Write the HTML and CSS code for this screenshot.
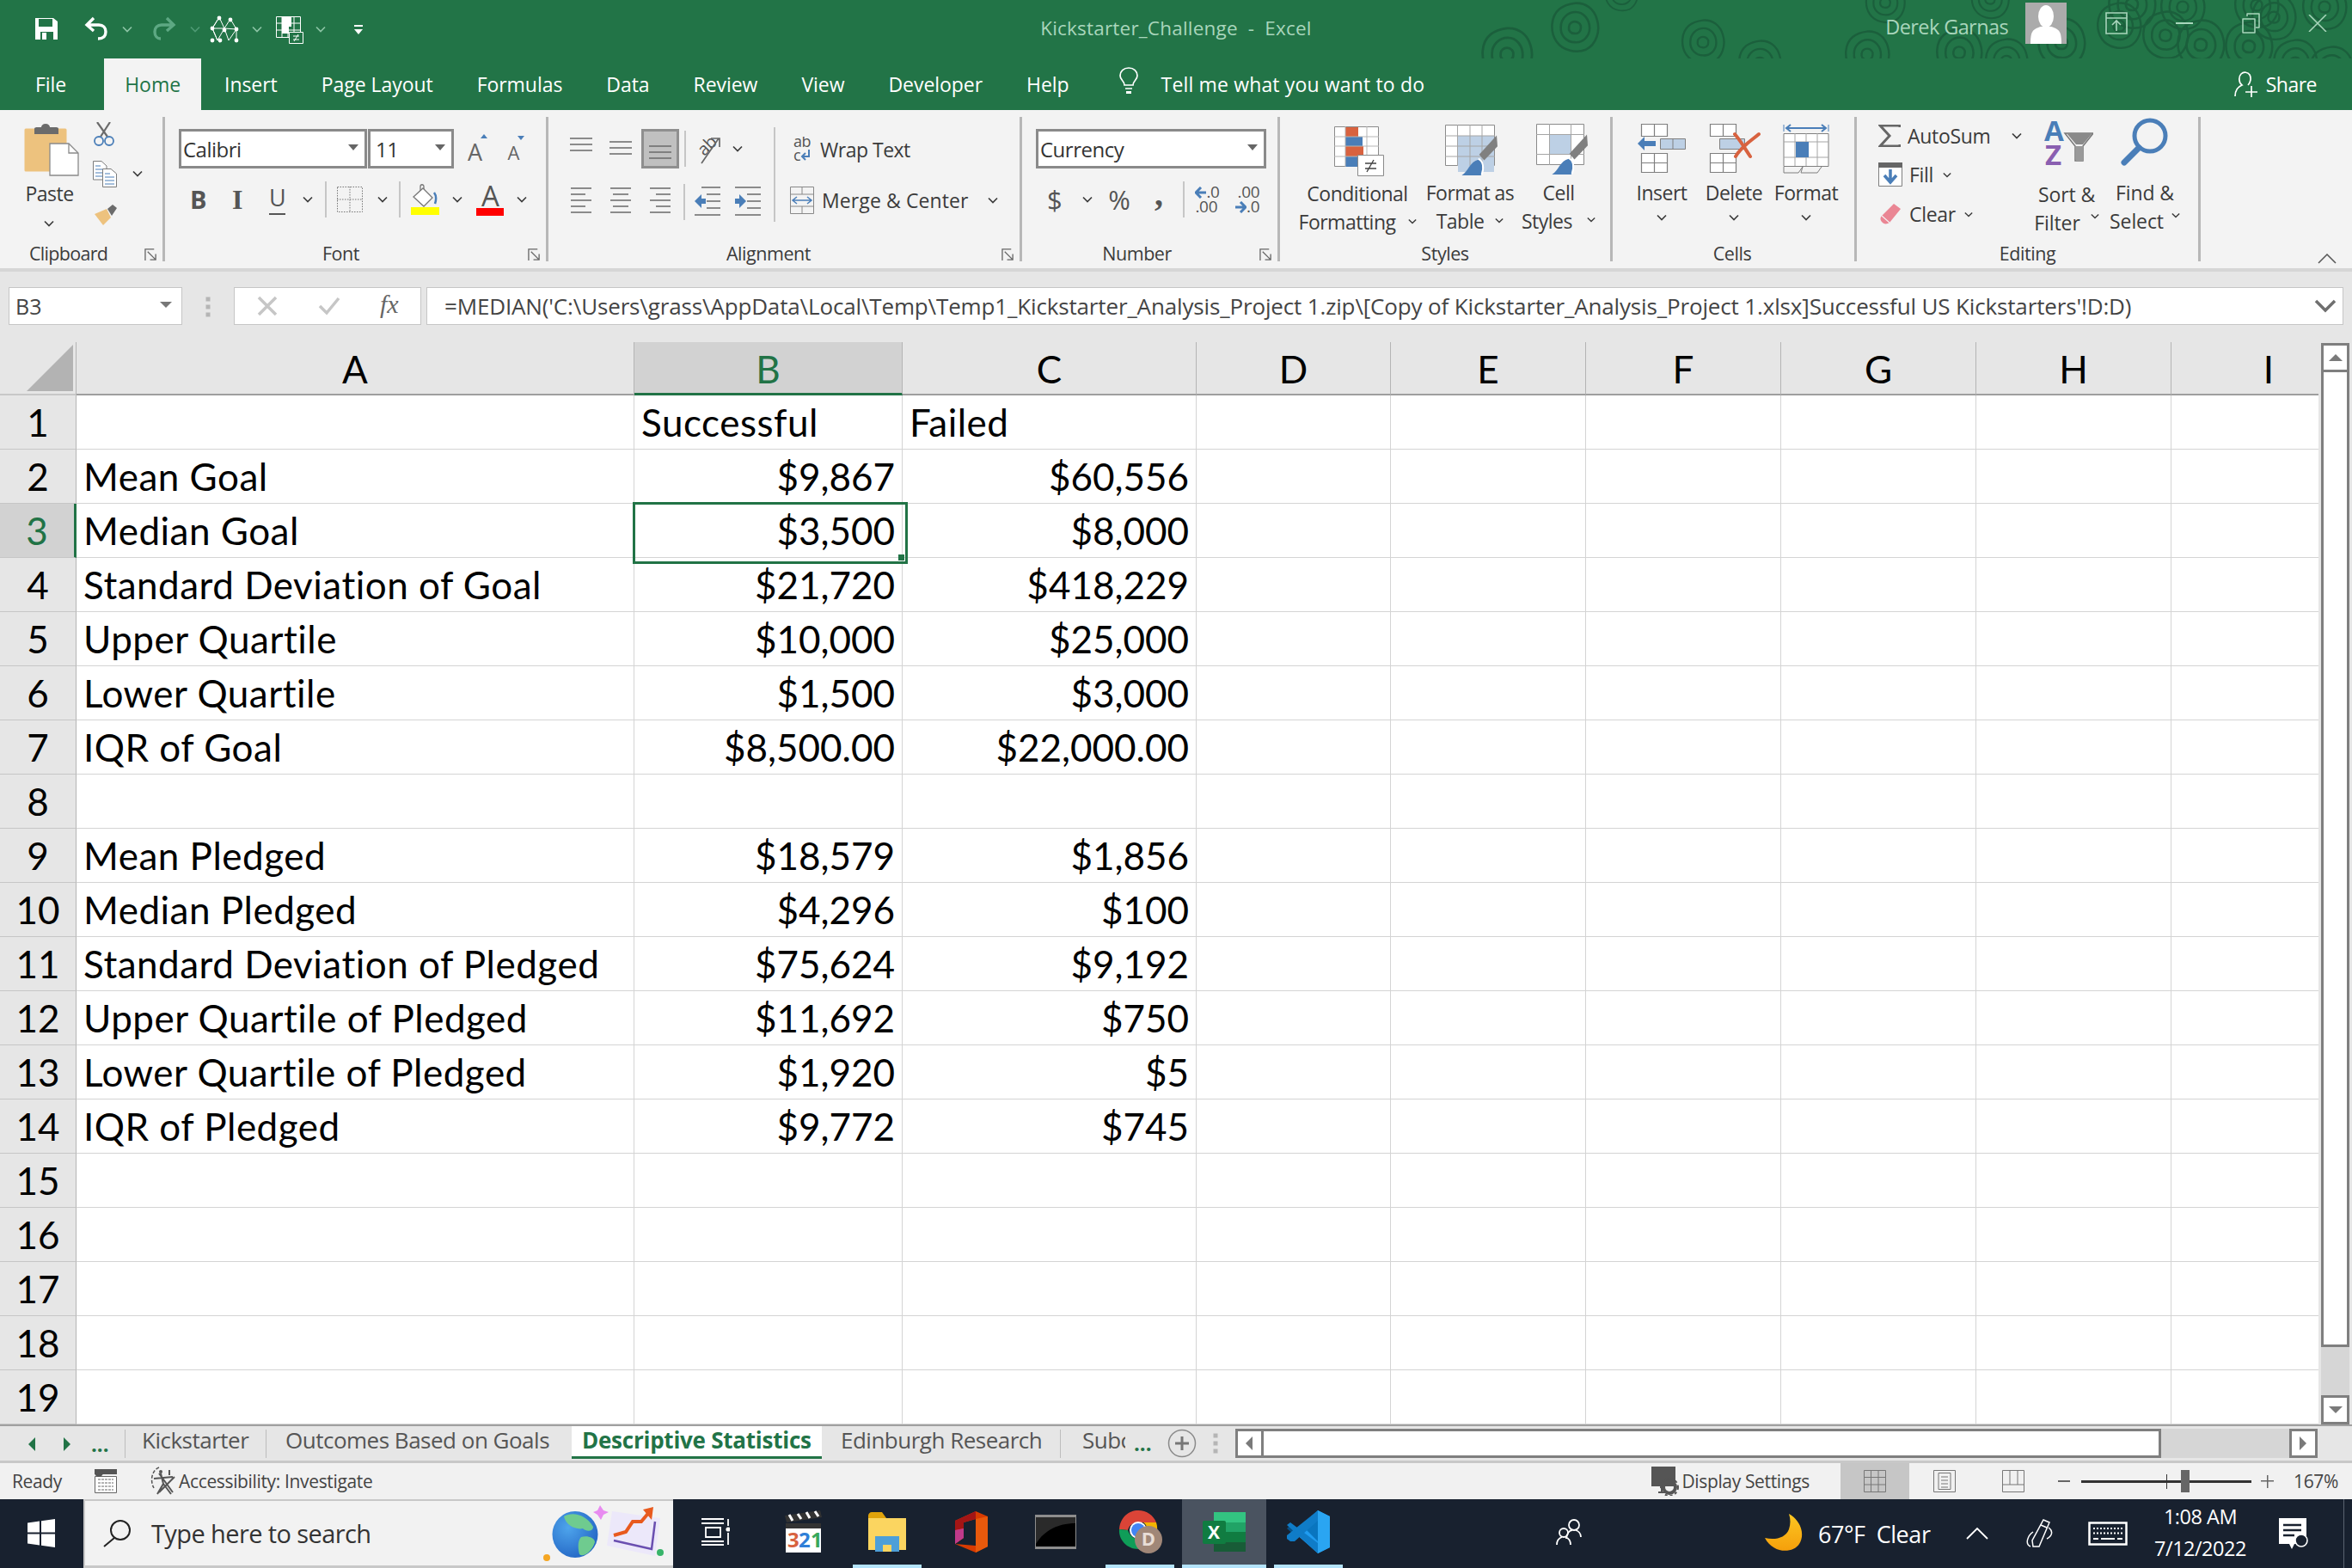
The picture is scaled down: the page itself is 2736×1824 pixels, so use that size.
FILE: index.html
```html
<!DOCTYPE html>
<html lang="en">
<head>
<meta charset="utf-8">
<title>Kickstarter_Challenge - Excel</title>
<link rel="stylesheet" href="styles.css">
</head>
<body>
<svg class="defs" width="0" height="0" aria-hidden="true">
  <defs>
    <symbol id="chev" viewBox="0 0 12 8"><path d="M1 1.5 6 6.5 11 1.5" fill="none" stroke="currentColor" stroke-width="1.7"/></symbol>
    <symbol id="launch" viewBox="0 0 16 16"><path d="M1 15V1H12M4 4 14 14M14 7V14H7" fill="none" stroke="#666" stroke-width="1.4"/></symbol>
    <symbol id="swirl" viewBox="0 0 70 70"><g fill="none" stroke="#1b5f3c" stroke-width="3"><path d="M35 2C50 1 61 10 65 24 70 40 64 58 50 65 37 70 19 67 10 54 1 41 2 20 14 10 20 5 27 3 35 2Z"/><path d="M36 14C47 14 55 24 55 36 55 47 46 56 35 55 24 55 15 46 16 34 16 23 25 14 36 14Z"/><path d="M35 27C40 27 44 31 43 36 43 41 39 44 34 43 29 43 26 39 27 34 27 30 31 27 35 27Z"/></g></symbol>
    <symbol id="lines-top" viewBox="0 0 26 24"><path d="M0 1H26M0 8H26M0 15H26" stroke="#6a6a6a" stroke-width="1.6"/></symbol>
    <symbol id="lines-left" viewBox="0 0 26 36"><path d="M1 2H25M1 9H18M1 16H25M1 23H18M1 30H25" stroke="#6a6a6a" stroke-width="1.6"/></symbol>
    <symbol id="lines-center" viewBox="0 0 26 36"><path d="M1 2H25M4 9H22M1 16H25M4 23H22M1 30H25" stroke="#6a6a6a" stroke-width="1.6"/></symbol>
    <symbol id="lines-right" viewBox="0 0 26 36"><path d="M1 2H25M8 9H25M1 16H25M8 23H25M1 30H25" stroke="#6a6a6a" stroke-width="1.6"/></symbol>
    <symbol id="brush" viewBox="0 0 62 62"><path d="M61 13 62 26 46 43 40 36Z" fill="#808080"/><path d="M19 61C27 56 29 44 39 42 46 46 46 55 42 61Z" fill="#4a7eb8"/><path d="M39 41C45 44 46 52 43 60" fill="none" stroke="#fff" stroke-width="2"/></symbol>
  </defs>
</svg>

<div class="app">
  <header class="titlebar">
    <svg class="swirls" width="1040" height="128" viewBox="1696 0 1040 128" aria-hidden="true">
      <use href="#swirl" x="1721" y="30" width="64" height="66"/><use href="#swirl" x="1800" y="2" width="64" height="60"/><use href="#swirl" x="1856" y="-28" width="60" height="42"/><use href="#swirl" x="1953" y="22" width="56" height="54"/><use href="#swirl" x="2019" y="46" width="56" height="54"/><use href="#swirl" x="2144" y="35" width="56" height="56"/><use href="#swirl" x="2250" y="30" width="58" height="62"/><use href="#swirl" x="2306" y="44" width="56" height="54"/><use href="#swirl" x="2168" y="-22" width="50" height="50"/><use href="#swirl" x="2290" y="-25" width="50" height="48"/><use href="#swirl" x="2368" y="20" width="60" height="60"/><use href="#swirl" x="2450" y="-25" width="60" height="60"/><use href="#swirl" x="2436" y="2" width="58" height="56"/><use href="#swirl" x="2490" y="12" width="58" height="58"/><use href="#swirl" x="2530" y="22" width="60" height="60"/><use href="#swirl" x="2586" y="22" width="60" height="64"/><use href="#swirl" x="2640" y="45" width="60" height="56"/><use href="#swirl" x="2684" y="52" width="56" height="58"/><use href="#swirl" x="2616" y="-8" width="58" height="56"/><use href="#swirl" x="2676" y="-20" width="56" height="56"/><use href="#swirl" x="2510" y="-20" width="58" height="56"/><use href="#swirl" x="2596" y="-22" width="58" height="56"/>
    </svg>
    <div class="qat">
      <svg class="q-save" width="26" height="26" viewBox="0 0 26 26"><path d="M0 1H21L26 5V26H0Z" fill="#fff"/><path d="M4 2H20V11H4Z" fill="#227447"/><path d="M6 17H21V26H6Z" fill="#227447"/><path d="M8 18H13V26H8Z" fill="#fff"/></svg>
      <svg class="q-undo" width="27" height="28" viewBox="0 0 27 28"><path d="M11 2 3 10 11 17M3 10H17C22 10 25 13 25 18S22 26 16 26" fill="none" stroke="#fff" stroke-width="3.4"/></svg>
      <svg class="q-chev qc-1" width="12" height="8"><use href="#chev"/></svg>
      <svg class="q-redo" width="27" height="28" viewBox="0 0 27 28"><path d="M16 2 24 10 16 17M24 10H10C5 10 2 13 2 18S5 26 9 26" fill="none" stroke="#5da883" stroke-width="3.4"/></svg>
      <svg class="q-chev q-dim qc-2" width="12" height="8"><use href="#chev"/></svg>
      <svg class="q-net" width="34" height="32" viewBox="0 0 34 32"><g fill="none" stroke="#fff" stroke-width="1"><path d="M11 2 3 15 9 29M11 2 17 15 22 29M11 2 3 15M24 4 17 15 9 29M24 4 31 16 31 29M3 15 9 29M31 16 22 29M3 15 17 15M17 15 31 16"/></g><g fill="#fff"><circle cx="11" cy="3" r="2.4"/><circle cx="24" cy="5" r="2.4"/><circle cx="3" cy="15" r="2.4"/><circle cx="17" cy="17" r="2.4"/><circle cx="31" cy="16" r="2.4"/><circle cx="3" cy="29" r="2.4"/><circle cx="12" cy="29" r="2.4"/><circle cx="31" cy="29" r="2.4"/></g></svg>
      <svg class="q-chev qc-3" width="12" height="8"><use href="#chev"/></svg>
      <svg class="q-cf" width="32" height="32" viewBox="0 0 32 32"><path d="M.5.5H28.5V24.5H.5Z" fill="none" stroke="#fff"/><path d="M7 .5V24.5M14 .5V24.5M21 .5V24.5M.5 8H28.5M.5 16H28.5" stroke="#fff"/><path d="M7 1H18V12H15V20H7Z" fill="#fff"/><path d="M15.500 18.500H31.500V31.500H15.500Z" fill="#227447" stroke="#fff"/><path d="M20 23H27M20 27H27M26 21 21 29" stroke="#fff"/></svg>
      <svg class="q-chev qc-4" width="12" height="8"><use href="#chev"/></svg>
      <svg class="q-cust" width="10" height="12" viewBox="0 0 10 12"><path d="M0 1H10" stroke="#fff" stroke-width="2"/><path d="M0 5H10L5 11Z" fill="#fff"/></svg>
    </div>
    <div class="doc-title">Kickstarter_Challenge&nbsp; -&nbsp; Excel</div>
    <div class="account">
      <span class="user">Derek Garnas</span>
      <svg class="avatar" width="48" height="48" viewBox="0 0 48 48"><path d="M0 0H48V48H0Z" fill="#ababab"/><ellipse cx="24" cy="16" rx="9" ry="13" fill="#fff"/><path d="M6 48C6 34 8 31 18 28H30C40 31 42 34 42 48Z" fill="#fff"/></svg>
      <svg class="win-display" width="26" height="26" viewBox="0 0 26 26"><path d="M1 1H25V25H1ZM1 7H25M13 22V11M8 15 13 10 18 15" fill="none" stroke="#a9d6bc" stroke-width="1.6"/></svg>
      <svg class="win-min" width="20" height="2" viewBox="0 0 20 2"><path d="M0 1H20" stroke="#a9d6bc" stroke-width="2"/></svg>
      <svg class="win-rest" width="21" height="24" viewBox="0 0 21 24"><path d="M1 7H15V23H1ZM6 4V1H20V17H16" fill="none" stroke="#a9d6bc" stroke-width="1.5" stroke-linejoin="round"/></svg>
      <svg class="win-close" width="22" height="20" viewBox="0 0 22 20"><path d="M1 0 21 20M21 0 1 20" stroke="#a9d6bc" stroke-width="1.5"/></svg>
    </div>
  </header>

  <nav class="tabs">
    <span class="tab tab-file">File</span>
    <span class="tab tab-home">Home</span>
    <span class="tab">Insert</span>
    <span class="tab">Page Layout</span>
    <span class="tab">Formulas</span>
    <span class="tab">Data</span>
    <span class="tab">Review</span>
    <span class="tab">View</span>
    <span class="tab">Developer</span>
    <span class="tab">Help</span>
    <svg class="bulb" width="24" height="32" viewBox="0 0 24 32"><path d="M7 21C7 16 2 15 2 10 2 5 6 1 12 1S22 5 22 10C22 15 17 16 17 21ZM8 25H16" fill="none" stroke="#fff" stroke-width="1.7"/><path d="M9 28H15V31H9Z" fill="#fff"/></svg>
    <span class="tell">Tell me what you want to do</span>
    <span class="share">
      <svg width="28" height="30" viewBox="0 0 28 30"><path d="M1 29C1 22 4 18 9 16 5 13 5 6 8 3 11 0 16 1 18 4 20 8 19 13 16 16" fill="none" stroke="#fff" stroke-width="1.7"/><path d="M20 17V30M13 24H27" stroke="#fff" stroke-width="1.7"/></svg>
      Share
    </span>
  </nav>

  <section class="ribbon">
    <div class="group g-clip">
      <div class="gbody clip-body">
        <div class="paste">
          <svg width="64" height="62" viewBox="0 0 64 62"><path d="M2 7H48V54H2Z" fill="#edc27e" stroke="#edc27e" stroke-width="3" stroke-linejoin="round"/><path d="M12 12V6C12 4 14 4 18 4H20C20 2 22 0 25 0S30 2 30 4H34C38 4 40 4 40 6V12Z" fill="#6b6b6b"/><path d="M30 23H52L63 34V60H30Z" fill="#fff" stroke="#8a8a8a" stroke-width="1.3"/><path d="M52 23V34H63" fill="none" stroke="#8a8a8a" stroke-width="1.3"/></svg>
          <span class="paste-label">Paste</span>
          <svg class="paste-chev" width="12" height="8"><use href="#chev"/></svg>
        </div>
        <div class="clip-tools">
          <svg class="cut" width="26" height="28" viewBox="0 0 26 28"><path d="M5 0 17 17M20 0 9 17" stroke="#6b6b6b" stroke-width="2.2"/><circle cx="7" cy="22" r="5" fill="none" stroke="#4a7eb8" stroke-width="1.8"/><circle cx="19" cy="22" r="5" fill="none" stroke="#4a7eb8" stroke-width="1.8"/></svg>
          <div class="copy-row">
            <svg width="28" height="31" viewBox="0 0 28 31"><path d="M.5.5H10L16 6V22H.5Z" fill="#fff" stroke="#7c7c7c"/><path d="M3 6H9M3 10H13M3 14H13M3 18H13" stroke="#4a7eb8"/><path d="M11.500 9.500H21L27.500 15V30.500H11.500Z" fill="#fff" stroke="#7c7c7c"/><path d="M14 15H20M14 19H25M14 23H25M14 27H25" stroke="#4a7eb8"/></svg>
            <svg class="copy-chev" width="12" height="8"><use href="#chev"/></svg>
          </div>
          <svg class="painter" width="26" height="24" viewBox="0 0 26 24"><path d="M0 11 14 5 19 15 10 24Z" fill="#edc27e"/><path d="M15 5 21 0 26 4 20 13Z" fill="#6b6b6b"/></svg>
        </div>
      </div>
      <div class="glabel">Clipboard</div>
      <svg class="launcher" width="15" height="15"><use href="#launch"/></svg>
    </div>

    <div class="group g-font">
      <div class="gbody rows">
        <div class="row row1">
          <div class="select sel-font"><span>Calibri</span><i class="tri"></i></div>
          <div class="select sel-size"><span>11</span><i class="tri"></i></div>
          <span class="grow">A<i class="up"></i></span>
          <span class="shrink">A<i class="down"></i></span>
        </div>
        <div class="row row2">
          <b class="fmt fmt-b">B</b>
          <i class="fmt fmt-i">I</i>
          <span class="fmt fmt-u">U</span>
          <svg class="c-u" width="12" height="8"><use href="#chev"/></svg>
          <i class="vsep vs-a"></i>
          <svg class="borders" width="30" height="30" viewBox="0 0 30 30"><path d="M.5.500H29.500V29.500H.5ZM15 0V30M0 15H30" fill="none" stroke="#777" stroke-dasharray="1.500 1.500"/></svg>
          <svg class="c-b" width="12" height="8"><use href="#chev"/></svg>
          <i class="vsep vs-b"></i>
          <svg class="fill" width="33" height="36" viewBox="0 0 33 36"><path d="M3 15 14 5 25 16 15 26Z" fill="#fff" stroke="#777" stroke-width="1.300"/><path d="M15 6V3C15 0 11 0 11 3V8" fill="none" stroke="#777" stroke-width="1.300"/><path d="M27 10C30 14 29 20 28 23" fill="none" stroke="#4a7eb8" stroke-width="2.500"/><path d="M0 27H33V36H0Z" fill="#ffff00"/></svg>
          <svg class="c-f" width="12" height="8"><use href="#chev"/></svg>
          <span class="fontcolor">A<i></i></span>
          <svg class="c-c" width="12" height="8"><use href="#chev"/></svg>
        </div>
      </div>
      <div class="glabel">Font</div>
      <svg class="launcher" width="15" height="15"><use href="#launch"/></svg>
    </div>

    <div class="group g-align">
      <div class="gbody align-body">
        <div class="align-left">
          <div class="row row1 a-r1">
            <svg class="al-t" width="26" height="24"><use href="#lines-top"/></svg>
            <svg class="al-m" width="26" height="24"><use href="#lines-top"/></svg>
            <span class="al-b"><svg width="26" height="24"><use href="#lines-top"/></svg></span>
            <i class="vsep vs-c"></i>
            <svg class="orient" width="30" height="36" viewBox="0 0 30 36"><text x="2" y="22" transform="rotate(-45 12 16)" class="orient-text">ab</text><path d="M6 35 26 6M17 6H27V16" fill="none" stroke="#666" stroke-width="1.700"/></svg>
            <svg class="c-o" width="12" height="8"><use href="#chev"/></svg>
          </div>
          <div class="row a-r2">
            <svg class="al-l" width="26" height="36"><use href="#lines-left"/></svg>
            <svg class="al-c" width="26" height="36"><use href="#lines-center"/></svg>
            <svg class="al-c" width="26" height="36"><use href="#lines-right"/></svg>
            <i class="vsep vs-d"></i>
            <svg class="indent" width="30" height="36" viewBox="0 0 30 36"><path d="M8 1H30M14 9H30M14 17H30M14 25H30M0 33H30" stroke="#6a6a6a" stroke-width="1.500"/><path d="M0 17 8 9V14H13V20H8V25Z" fill="#4a7eb8"/></svg>
            <svg class="outdent" width="30" height="36" viewBox="0 0 30 36"><path d="M0 1H30M14 9H30M14 17H30M14 25H30M0 33H30" stroke="#6a6a6a" stroke-width="1.500"/><path d="M13 17 5 9V14H0V20H5V25Z" fill="#4a7eb8"/></svg>
          </div>
        </div>
        <i class="vsep vs-e"></i>
        <div class="align-right">
          <div class="wrap">
            <svg width="22" height="30" viewBox="0 0 22 30"><text x="1" y="12" class="wrap-ab">ab</text><text x="1" y="28" class="wrap-ab">c</text><path d="M19 15V23H12M15 19 11 23 15 27" fill="none" stroke="#4a7eb8" stroke-width="2"/></svg>
            <span>Wrap Text</span>
          </div>
          <div class="merge">
            <svg width="28" height="32" viewBox="0 0 28 32"><path d="M.5.500H27.500V31.500H.5ZM0 9H28M0 23H28M14 0V9M14 23V32" fill="none" stroke="#888"/><path d="M3 16H25M8 12 3 16 8 20M20 12 25 16 20 20" fill="none" stroke="#4a7eb8" stroke-width="1.500"/></svg>
            <span>Merge &amp; Center</span>
            <svg class="merge-chev" width="12" height="8"><use href="#chev"/></svg>
          </div>
        </div>
      </div>
      <div class="glabel">Alignment</div>
      <svg class="launcher" width="15" height="15"><use href="#launch"/></svg>
    </div>

    <div class="group g-num">
      <div class="gbody rows">
        <div class="row row1"><div class="select sel-num"><span>Currency</span><i class="tri"></i></div></div>
        <div class="row row2">
          <span class="numsym n-d">$</span>
          <svg class="c-d" width="12" height="8"><use href="#chev"/></svg>
          <span class="numsym n-p">%</span>
          <span class="numsym n-c">,</span>
          <i class="vsep vs-f"></i>
          <span class="dec dec-in"><span><svg width="13" height="14" viewBox="0 0 13 14"><path d="M7 1 1 7 7 13M2 7H13" fill="none" stroke="#4a7eb8" stroke-width="3"/></svg>.0</span><span>.00</span></span>
          <span class="dec dec-out"><span>.00</span><span><svg width="13" height="14" viewBox="0 0 13 14"><path d="M6 1 12 7 6 13M11 7H0" fill="none" stroke="#4a7eb8" stroke-width="3"/></svg>.0</span></span>
        </div>
      </div>
      <div class="glabel">Number</div>
      <svg class="launcher" width="15" height="15"><use href="#launch"/></svg>
    </div>

    <div class="group g-styles">
      <div class="gbody bigs">
        <div class="big big-cf">
          <svg width="60" height="60" viewBox="0 0 60 60"><path d="M.5.5H51.500V46.500H.5Z" fill="#fff" stroke="#8a8a8a"/><path d="M13 1H28V12H13Z" fill="#d8623f"/><path d="M13 12H33V23H13Z" fill="#4a7eb8"/><path d="M13 23H34V35H13Z" fill="#d8623f"/><path d="M13 35H28V47H13Z" fill="#4a7eb8"/><path d="M0 12H52M0 23H52M0 35H52M13 0V47M38 0V47" stroke="#b5b5b5"/><path d="M27.500 33.500H57.500V57.500H27.500Z" fill="#fff" stroke="#8a8a8a"/><path d="M36 43H49M36 49H49M46 39 38 53" stroke="#444" stroke-width="1.400"/></svg>
          <span>Conditional</span>
          <span>Formatting<svg width="10" height="7"><use href="#chev"/></svg></span>
        </div>
        <div class="big big-fat">
          <svg width="62" height="60" viewBox="0 0 62 60"><path d="M.5.5H57.500V47.500H.5Z" fill="#fff" stroke="#8a8a8a"/><path d="M15 13H57V55H15Z" fill="#bdd0e5"/><path d="M14.500 0V48M29 0V48M43 0V48M0 13H58M0 25H58M0 37H58" stroke="#a5a5a5"/><use href="#brush" width="62" height="60"/></svg>
          <span>Format as</span>
          <span>Table<svg width="10" height="7"><use href="#chev"/></svg></span>
        </div>
        <div class="big big-cs">
          <svg width="60" height="60" viewBox="0 0 60 60"><path d="M.5.5H55.500V47.500H.5Z" fill="#fff" stroke="#8a8a8a"/><path d="M16 13H41V36H16Z" fill="#bdd0e5"/><path d="M15.500 0V48M40.500 0V48M0 12.500H56M0 35.500H56" stroke="#a5a5a5"/><use href="#brush" width="60" height="60"/></svg>
          <span>Cell</span>
          <span>Styles<svg width="10" height="7"><use href="#chev"/></svg></span>
        </div>
      </div>
      <div class="glabel">Styles</div>
    </div>

    <div class="group g-cells">
      <div class="gbody bigs">
        <div class="big big-ins">
          <svg width="58" height="58" viewBox="0 0 58 58"><g fill="#fff" stroke="#7f7f7f" stroke-width="1.200"><path d="M5.500 .5H35.500V14.500H5.500ZM20.500 0V15M5.500 34.500H35.500V56.500H5.500ZM20.500 34V57M5 45.500H36"/></g><path d="M27.500 17.500H56.500V29.500H27.500Z" fill="#bdd0e5" stroke="#7f7f7f"/><path d="M42 17V30" stroke="#7f7f7f"/><path d="M1 23 9 15V20H22V26H9V31Z" fill="#4a7eb8"/></svg>
          <span>Insert</span>
          <svg class="big-chev" width="12" height="8"><use href="#chev"/></svg>
        </div>
        <div class="big big-del">
          <svg width="62" height="58" viewBox="0 0 62 58"><g fill="#fff" stroke="#7f7f7f" stroke-width="1.200"><path d="M3.500 .5H33.500V14.500H3.500ZM18.500 0V15M3.500 34.500H33.500V56.500H3.500ZM18.500 34V57M3 45.500H34"/></g><path d="M14.500 17.500H43.500V29.500H14.500Z" fill="#bdd0e5" stroke="#7f7f7f"/><path d="M32 12C39 20 44 29 50 38M60 12C52 19 40 26 33 38" fill="none" stroke="#d8623f" stroke-width="4" stroke-linecap="round"/></svg>
          <span>Delete</span>
          <svg class="big-chev" width="12" height="8"><use href="#chev"/></svg>
        </div>
        <div class="big big-fmt">
          <svg width="54" height="58" viewBox="0 0 54 58"><path d="M1 1V9M53 1V9" stroke="#4a7eb8" stroke-width="1"/><path d="M4 5H50M9 1 4 5 9 9M45 1 50 5 45 9" fill="none" stroke="#4a7eb8" stroke-width="2"/><path d="M1 11.500H53V49.500H1Z" fill="#fff" stroke="#7f7f7f"/><path d="M14 11V49M40 11V49M27 11V49M1 21H53M1 39H53" stroke="#a5a5a5"/><path d="M15 21H30V39H15Z" fill="#4a7eb8"/><path d="M1 50V57H18L23 50M23 50 21 57H40L45 50" fill="none" stroke="#7f7f7f"/></svg>
          <span>Format</span>
          <svg class="big-chev" width="12" height="8"><use href="#chev"/></svg>
        </div>
      </div>
      <div class="glabel">Cells</div>
    </div>

    <div class="group g-edit">
      <div class="gbody edit-body">
        <div class="edit-list">
          <div class="e-row e-sum">
            <svg width="26" height="26" viewBox="0 0 26 26"><path d="M25 3V1H2L13 13 2 25H25V23" fill="none" stroke="#666" stroke-width="3"/></svg>
            <span>AutoSum</span>
            <svg class="e-c1" width="12" height="8"><use href="#chev"/></svg>
          </div>
          <div class="e-row e-fill">
            <svg width="28" height="28" viewBox="0 0 28 28"><path d="M.5.5H27.500V27.500H.5Z" fill="#fff" stroke="#7f7f7f"/><path d="M0 0H28V6H0Z" fill="#666"/><path d="M14 8V21M7 15 14 23 21 15" fill="none" stroke="#4a7eb8" stroke-width="3.500"/></svg>
            <span>Fill</span>
            <svg class="e-c2" width="10" height="7"><use href="#chev"/></svg>
          </div>
          <div class="e-row e-clear">
            <svg width="25" height="24" viewBox="0 0 25 24"><path d="M16 0 24 6 11 22C8 24 4 24 2 21 0 19 0 16 2 14Z" fill="#ea8694"/><path d="M2 14 11 22" stroke="#f3f3f3" stroke-width="1.200"/></svg>
            <span>Clear</span>
            <svg class="e-c3" width="10" height="7"><use href="#chev"/></svg>
          </div>
        </div>
        <div class="big big-sort">
          <svg width="58" height="54" viewBox="0 0 58 54"><text x="1" y="24" class="sort-a">A</text><text x="2" y="52" class="sort-z">Z</text><path d="M25 15H58L46 30V47H37V30Z" fill="#f3f3f3" stroke="#777" stroke-width="1.500"/><path d="M27 15H57L46 28H38Z" fill="#8a8a8a"/><path d="M38 30H46V47H38Z" fill="#999"/></svg>
          <span>Sort &amp;</span>
          <span>Filter<svg width="10" height="7"><use href="#chev"/></svg></span>
        </div>
        <div class="big big-find">
          <svg width="56" height="56" viewBox="0 0 56 56"><circle cx="34" cy="21" r="18" fill="none" stroke="#4a7eb8" stroke-width="5"/><path d="M21 35 4 52" stroke="#4a7eb8" stroke-width="7" stroke-linecap="round"/></svg>
          <span>Find &amp;</span>
          <span>Select<svg width="10" height="7"><use href="#chev"/></svg></span>
        </div>
      </div>
      <div class="glabel">Editing</div>
    </div>

    <svg class="collapse" width="22" height="12" viewBox="0 0 22 12"><path d="M1 11 11 1 21 11" fill="none" stroke="#555" stroke-width="1.500"/></svg>
  </section>

  <section class="formula">
    <div class="namebox"><span>B3</span><i class="tri"></i></div>
    <div class="dots"><i></i><i></i><i></i></div>
    <div class="fxbox">
      <svg width="24" height="24" viewBox="0 0 24 24"><path d="M2 2 22 22M22 2 2 22" stroke="#c6c6c6" stroke-width="3.500"/></svg>
      <svg width="26" height="22" viewBox="0 0 26 22"><path d="M2 11 10 19 24 2" fill="none" stroke="#c6c6c6" stroke-width="3.500"/></svg>
      <span class="fx">fx</span>
    </div>
    <div class="fbox">
      <span>=MEDIAN('C:\Users\grass\AppData\Local\Temp\Temp1_Kickstarter_Analysis_Project 1.zip\[Copy of Kickstarter_Analysis_Project 1.xlsx]Successful US Kickstarters'!D:D)</span>
      <svg width="26" height="16" viewBox="0 0 26 16"><path d="M2 2 13 13 24 2" fill="none" stroke="#6f6f6f" stroke-width="3.500"/></svg>
    </div>
  </section>

  <section class="sheet-area">
    <div class="sheet">
      <div class="ch corner"><svg width="54" height="54" viewBox="0 0 54 54"><path d="M54 0V54H0Z" fill="#b3b3b3"/></svg></div>
      <div class="ch">A</div><div class="ch ch-sel">B</div><div class="ch">C</div><div class="ch">D</div><div class="ch">E</div><div class="ch">F</div><div class="ch">G</div><div class="ch">H</div><div class="ch">I</div>

      <div class="rh">1</div><div class="c"></div><div class="c">Successful</div><div class="c">Failed</div><div class="c"></div><div class="c"></div><div class="c"></div><div class="c"></div><div class="c"></div><div class="c"></div>
      <div class="rh">2</div><div class="c">Mean Goal</div><div class="c r">$9,867</div><div class="c r">$60,556</div><div class="c"></div><div class="c"></div><div class="c"></div><div class="c"></div><div class="c"></div><div class="c"></div>
      <div class="rh rh-sel">3</div><div class="c">Median Goal</div><div class="c r active">$3,500</div><div class="c r">$8,000</div><div class="c"></div><div class="c"></div><div class="c"></div><div class="c"></div><div class="c"></div><div class="c"></div>
      <div class="rh">4</div><div class="c">Standard Deviation of Goal</div><div class="c r">$21,720</div><div class="c r">$418,229</div><div class="c"></div><div class="c"></div><div class="c"></div><div class="c"></div><div class="c"></div><div class="c"></div>
      <div class="rh">5</div><div class="c">Upper Quartile</div><div class="c r">$10,000</div><div class="c r">$25,000</div><div class="c"></div><div class="c"></div><div class="c"></div><div class="c"></div><div class="c"></div><div class="c"></div>
      <div class="rh">6</div><div class="c">Lower Quartile</div><div class="c r">$1,500</div><div class="c r">$3,000</div><div class="c"></div><div class="c"></div><div class="c"></div><div class="c"></div><div class="c"></div><div class="c"></div>
      <div class="rh">7</div><div class="c">IQR of Goal</div><div class="c r">$8,500.00</div><div class="c r">$22,000.00</div><div class="c"></div><div class="c"></div><div class="c"></div><div class="c"></div><div class="c"></div><div class="c"></div>
      <div class="rh">8</div><div class="c"></div><div class="c"></div><div class="c"></div><div class="c"></div><div class="c"></div><div class="c"></div><div class="c"></div><div class="c"></div><div class="c"></div>
      <div class="rh">9</div><div class="c">Mean Pledged</div><div class="c r">$18,579</div><div class="c r">$1,856</div><div class="c"></div><div class="c"></div><div class="c"></div><div class="c"></div><div class="c"></div><div class="c"></div>
      <div class="rh">10</div><div class="c">Median Pledged</div><div class="c r">$4,296</div><div class="c r">$100</div><div class="c"></div><div class="c"></div><div class="c"></div><div class="c"></div><div class="c"></div><div class="c"></div>
      <div class="rh">11</div><div class="c">Standard Deviation of Pledged</div><div class="c r">$75,624</div><div class="c r">$9,192</div><div class="c"></div><div class="c"></div><div class="c"></div><div class="c"></div><div class="c"></div><div class="c"></div>
      <div class="rh">12</div><div class="c">Upper Quartile of Pledged</div><div class="c r">$11,692</div><div class="c r">$750</div><div class="c"></div><div class="c"></div><div class="c"></div><div class="c"></div><div class="c"></div><div class="c"></div>
      <div class="rh">13</div><div class="c">Lower Quartile of Pledged</div><div class="c r">$1,920</div><div class="c r">$5</div><div class="c"></div><div class="c"></div><div class="c"></div><div class="c"></div><div class="c"></div><div class="c"></div>
      <div class="rh">14</div><div class="c">IQR of Pledged</div><div class="c r">$9,772</div><div class="c r">$745</div><div class="c"></div><div class="c"></div><div class="c"></div><div class="c"></div><div class="c"></div><div class="c"></div>
      <div class="rh">15</div><div class="c"></div><div class="c"></div><div class="c"></div><div class="c"></div><div class="c"></div><div class="c"></div><div class="c"></div><div class="c"></div><div class="c"></div>
      <div class="rh">16</div><div class="c"></div><div class="c"></div><div class="c"></div><div class="c"></div><div class="c"></div><div class="c"></div><div class="c"></div><div class="c"></div><div class="c"></div>
      <div class="rh">17</div><div class="c"></div><div class="c"></div><div class="c"></div><div class="c"></div><div class="c"></div><div class="c"></div><div class="c"></div><div class="c"></div><div class="c"></div>
      <div class="rh">18</div><div class="c"></div><div class="c"></div><div class="c"></div><div class="c"></div><div class="c"></div><div class="c"></div><div class="c"></div><div class="c"></div><div class="c"></div>
      <div class="rh">19</div><div class="c"></div><div class="c"></div><div class="c"></div><div class="c"></div><div class="c"></div><div class="c"></div><div class="c"></div><div class="c"></div><div class="c"></div>
    </div>
    <div class="vscroll">
      <div class="sb-btn"><i class="tri tri-up"></i></div>
      <div class="sb-thumb"></div>
      <div class="sb-track"></div>
      <div class="sb-btn"><i class="tri tri-down"></i></div>
    </div>
  </section>

  <section class="sheetbar">
    <div class="sheet-nav">
      <i class="nav-l"></i><i class="nav-r"></i><span class="more">...</span>
    </div>
    <span class="stab st-k">Kickstarter</span>
    <span class="stab st-o">Outcomes Based on Goals</span>
    <span class="stab st-active">Descriptive Statistics</span>
    <span class="stab st-e">Edinburgh Research</span>
    <span class="stab st-s"><span class="clip">Subc</span></span>
    <span class="more more2">...</span>
    <svg class="addsheet" width="34" height="34" viewBox="0 0 34 34"><circle cx="17" cy="17" r="15.500" fill="none" stroke="#8a8a8a" stroke-width="1.500"/><path d="M17 9V25M9 17H25" stroke="#777" stroke-width="3"/></svg>
    <div class="dots dots-s"><i></i><i></i><i></i></div>
    <div class="hscroll">
      <div class="hs-btn"><i class="nav-gl"></i></div>
      <div class="hs-thumb"></div>
      <div class="hs-track"></div>
      <div class="hs-btn"><i class="nav-gr"></i></div>
    </div>
  </section>

  <footer class="status">
    <span class="ready">Ready</span>
    <svg class="macro" width="26" height="28" viewBox="0 0 26 28"><path d="M.5 8.500H25.500V27.500H.5Z" fill="#fff" stroke="#666"/><path d="M0 0H26V6H0Z" fill="#555"/><circle cx="5" cy="4" r="5" fill="#555"/><path d="M4 12H22M4 16H22M4 20H22M4 24H22" stroke="#666" stroke-dasharray="3 1"/></svg>
    <svg class="a11y" width="34" height="34" viewBox="0 0 34 34"><path d="M12 1C4 4 1 16 6 25" fill="none" stroke="#555" stroke-width="1.500" stroke-dasharray="4 2"/><circle cx="14" cy="6" r="2" fill="#555"/><path d="M6 14 28 12M14 8 17 20 10 32M17 20 26 32M24 4V10M12 8 28 30M30 12 12 30" fill="none" stroke="#555" stroke-width="2"/></svg>
    <span class="a11y-text">Accessibility: Investigate</span>
    <span class="status-right">
      <svg class="display" width="32" height="34" viewBox="0 0 32 34"><path d="M0 0H28V23H0Z" fill="#555"/><path d="M8 30H16M12 23V30" stroke="#555" stroke-width="2"/><circle cx="21" cy="24" r="7" fill="none" stroke="#555" stroke-width="4"/><circle cx="21" cy="24" r="10" fill="none" stroke="#555" stroke-width="2" stroke-dasharray="3 3"/></svg>
      <span class="display-text">Display Settings</span>
      <span class="view-sel"><svg width="26" height="26" viewBox="0 0 26 26"><path d="M.5.5H25.500V25.500H.5ZM8.500 0V26M17 0V26M0 8.500H26M0 17H26" fill="none" stroke="#777"/></svg></span>
      <svg class="v-page" width="26" height="26" viewBox="0 0 26 26"><path d="M.5.5H25.500V25.500H.5Z" fill="none" stroke="#777"/><path d="M6 3.500H20V22.500H6ZM9 8H17M9 12H17M9 16H17M9 20H17" fill="none" stroke="#777"/></svg>
      <svg class="v-brk" width="26" height="26" viewBox="0 0 26 26"><path d="M.5.5H25.500V25.500H.5ZM9 0V17M18 0V17M0 17H26" fill="none" stroke="#777"/></svg>
      <i class="z-minus"></i>
      <span class="z-slider"><i class="z-tick"></i><i class="z-thumb"></i></span>
      <span class="z-plus"></span>
      <span class="z-pct">167%</span>
    </span>
  </footer>

  <footer class="taskbar">
    <div class="start">
      <svg width="32" height="33" viewBox="0 0 32 33"><path d="M0 4.500 14 2.500V15.500H0ZM16 2.300 32 0V15.500H16ZM0 17.500H14V30.500L0 28.500ZM16 17.500H32V33L16 30.800Z" fill="#fff"/></svg>
    </div>
    <div class="search">
      <svg class="search-ic" width="33" height="33" viewBox="0 0 33 33"><circle cx="20" cy="13" r="11" fill="none" stroke="#222" stroke-width="2"/><path d="M13 22 1 32" stroke="#222" stroke-width="2"/></svg>
      <span class="search-text">Type here to search</span>
      <svg class="search-art" width="140" height="76" viewBox="0 0 140 76"><defs><radialGradient id="gl" cx=".35" cy=".35" r=".8"><stop offset="0" stop-color="#4ea5ec"/><stop offset="1" stop-color="#1f5fc0"/></radialGradient></defs><ellipse cx="37" cy="39" rx="26.500" ry="27" fill="url(#gl)"/><path d="M24 18C34 12 50 16 58 30 58 36 50 36 46 32 38 34 26 28 24 18ZM44 42C50 40 60 42 60 48 56 60 46 66 42 62 40 54 40 46 44 42Z" fill="#6fcb8f"/><path d="M66 5 70 11 76 13 70 16 67 22 63 16 58 13 63 11Z" fill="#e88bf0"/><path d="M80 12 136 20 130 64 74 52Z" fill="#ece8fa"/><path d="M82 46 126 56 130 24" fill="none" stroke="#6a4fb0" stroke-width="2.500"/><path d="M82 40 96 36 104 24 114 24 124 12" fill="none" stroke="#e85a1e" stroke-width="4"/><path d="M116 10 128 7 126 22Z" fill="#e85a1e"/><circle cx="136" cy="60" r="4" fill="#38b46a"/><circle cx="4" cy="66" r="4" fill="#f5a623"/></svg>
    </div>
    <div class="app-slot slot-first">
      <svg width="34" height="32" viewBox="0 0 34 32"><path d="M1 1H27M1 6H27M6 11H23V22H6ZM1 27H27M1 31H27M32 1V9M32 17V31" fill="none" stroke="#fff" stroke-width="1.800"/><circle cx="32" cy="13" r="2.600" fill="#fff"/></svg>
    </div>
    <div class="app-slot">
      <svg width="44" height="50" viewBox="0 0 44 50"><path d="M1 6 42 0 44 8 3 14Z" fill="#333"/><path d="M6 5 10 12M16 4 20 10M26 2 30 9M36 1 40 7" stroke="#fff" stroke-width="3"/><path d="M2 15H43V49H2Z" fill="#fff"/><path d="M2 15H43V21H2Z" fill="#333"/><text x="4" y="43" class="clap-1">3</text><text x="17" y="43" class="clap-2">2</text><text x="31" y="43" class="clap-3">1</text></svg>
    </div>
    <div class="app-slot running">
      <svg width="44" height="46" viewBox="0 0 44 46"><path d="M0 4C0 2 2 0 4 0H16L21 7H0Z" fill="#e0a30a"/><path d="M0 7H44V44H0Z" fill="#fbd560"/><path d="M8 28H36V46H8Z" fill="#4d9fd8"/><path d="M17 38H27V46H17Z" fill="#fbd560"/></svg>
    </div>
    <div class="app-slot">
      <svg width="38" height="48" viewBox="0 0 38 48"><path d="M0 11 24 0 38 6V41L24 48 0 38 24 40V9L10 13V31L0 38Z" fill="#d83b01"/><path d="M0 11 24 0V9L10 13V20L0 22Z" fill="#a31515"/><path d="M0 22 10 20V31L0 38Z" fill="#c03a8a"/><path d="M24 9 38 6V41L24 48Z" fill="#e8590c"/></svg>
    </div>
    <div class="app-slot">
      <svg width="48" height="40" viewBox="0 0 48 40"><path d="M0 0H48V40H0Z" fill="#8d8d8d"/><path d="M1 3H47V37H1Z" fill="#000"/><path d="M1 3H47V10C30 10 12 16 1 34Z" fill="#2a2a2a"/></svg>
    </div>
    <div class="app-slot running">
      <svg class="chrome" width="54" height="54" viewBox="0 0 54 54"><path d="M3 24C4 10 14 2 25 2 35 2 43 8 46 16H25C18 16 14 20 13 25Z" fill="#db4437"/><path d="M3 24C2 36 12 47 25 47L34 32 25 35C19 35 15 31 13 25Z" fill="#0f9d58"/><path d="M46 16C50 28 44 40 25 47L34 32 36 25C36 22 34 18 31 16Z" fill="#f4b400"/><circle cx="25" cy="25" r="10" fill="#fff"/><circle cx="25" cy="25" r="8" fill="#4285f4"/><circle cx="37" cy="36" r="16" fill="#a08778"/><text x="37" y="43" class="chrome-d">D</text></svg>
    </div>
    <div class="app-slot running slot-excel">
      <svg width="50" height="46" viewBox="0 0 50 46"><path d="M13 0H50V12H13Z" fill="#33c481"/><path d="M13 12H32V23H13Z" fill="#21a366"/><path d="M32 12H50V23H32Z" fill="#21a366"/><path d="M13 23H50V35H13Z" fill="#107c41"/><path d="M13 35H50V46H13Z" fill="#185c37"/><rect x="0" y="10" width="27" height="27" rx="2" fill="#107c41"/><text x="6" y="31" class="xl-x">X</text></svg>
    </div>
    <div class="app-slot running">
      <svg width="50" height="50" viewBox="0 0 50 50"><path d="M36 0 50 7V43L36 50 10 27Z" fill="#1f9cf0"/><path d="M36 0 10 24 3 18 0 21 9 29 20 20 36 36Z" fill="#0065a9" opacity=".7"/><path d="M0 29 36 0V12L9 36 4 36 0 33Z" fill="#0f7cc8"/><path d="M0 17 4 14 36 38V50Z" fill="#0f7cc8"/><path d="M36 0 50 7V43L36 50Z" fill="#2aa5f2"/></svg>
    </div>
    <svg class="people" width="30" height="32" viewBox="0 0 30 32"><g fill="none" stroke="#fff" stroke-width="1.800"><circle cx="21" cy="8" r="6"/><path d="M12 24C12 18 16 14 19 14M23 14C26 15 29 18 29 22"/><circle cx="9" cy="17" r="5"/><path d="M1 31C1 26 4 23 7 22M11 22C14 23 17 26 17 31"/></g></svg>
    <svg class="moon" width="44" height="44" viewBox="0 0 44 44"><defs><linearGradient id="mg" x1="0" y1="0" x2="0" y2="1"><stop offset="0" stop-color="#fcc722"/><stop offset="1" stop-color="#f59f0b"/></linearGradient></defs><path d="M28 0C42 8 47 24 40 35 33 46 10 47 0 28 12 31 24 28 28 18 30 12 30 6 28 0Z" fill="url(#mg)"/></svg>
    <span class="weather">67°F&nbsp; Clear</span>
    <svg class="caret" width="26" height="14" viewBox="0 0 26 14"><path d="M1 13 13 1 25 13" fill="none" stroke="#fff" stroke-width="1.800"/></svg>
    <svg class="pen" width="34" height="34" viewBox="0 0 34 34"><path d="M22 1 29 4 17 32 10 32 9 25ZM19 7 26 10" fill="none" stroke="#fff" stroke-width="1.500"/><path d="M10 15C4 19 0 29 7 32M28 10C34 14 32 20 26 23" fill="none" stroke="#fff" stroke-width="1.500"/></svg>
    <svg class="kbd" width="46" height="28" viewBox="0 0 46 28"><path d="M1.500 1.500H44.500V26.500H1.500Z" fill="none" stroke="#fff" stroke-width="2.500"/><path d="M6 8H40M6 13.500H40" stroke="#fff" stroke-width="2" stroke-dasharray="2 2"/><path d="M6 20H12M15 20H31M34 20H40" stroke="#fff" stroke-width="2"/></svg>
    <div class="clock"><span>1:08 AM</span><span>7/12/2022</span></div>
    <svg class="notif" width="34" height="36" viewBox="0 0 34 36"><path d="M0 0H32V30H18L15 36 12 30H0Z" fill="#fff"/><path d="M5 8H26M5 14H26M5 20H18" stroke="#18212f" stroke-width="2.400"/><circle cx="26" cy="26" r="7" fill="#18212f" stroke="#fff" stroke-width="1.600"/></svg>
    <i class="peek"></i>
  </footer>
</div>
</body>
</html>
```
FILE: styles.css
```css
* { box-sizing: border-box; }
html, body { margin: 0; padding: 0; }
body { width: 2736px; height: 1824px; overflow: hidden; font-family: "Open Sans", "Noto Sans", sans-serif; color: #3b3b3b; background: #f3f3f3; }
i { font-style: normal; display: block; }
svg { display: block; flex: none; }
.defs { position: absolute; }
.app { width: 2736px; height: 1824px; display: flex; flex-direction: column; overflow: hidden; }

/* title bar */
.titlebar { height: 68px; flex: none; background: #227447; display: grid; grid-template-columns: 1fr auto 1fr; align-items: center; position: relative; z-index: 2; font-size: 22.5px; color: #a9d6bc; letter-spacing: .2px; }
.swirls { position: absolute; right: 0; top: 0; pointer-events: none; }
.qat { display: flex; align-items: center; padding-left: 41px; position: relative; color: #8cc4a5; margin-top: -2px; }
.q-undo { margin-left: 31px; }
.q-chev { margin-top: 2px; }
.qc-1 { margin-left: 17px; }
.q-redo { margin-left: 24px; }
.q-dim { color: #4e9a74; }
.qc-2 { margin-left: 16px; }
.q-net { margin-left: 11px; margin-top: 2px; }
.qc-3 { margin-left: 15px; }
.q-cf { margin-left: 16px; margin-top: 4px; }
.qc-4 { margin-left: 14px; }
.q-cust { margin-left: 33px; margin-top: 4px; }
.doc-title { position: relative; margin-top: -3px; white-space: nowrap; }
.account { display: flex; align-items: center; justify-content: flex-end; padding-right: 29px; position: relative; margin-top: -14px; }
.user { font-size: 23.500px; margin-right: 20px; letter-spacing: -.6px; margin-top: 7px; }
.win-display { margin-left: 45px; }
.win-min { margin-left: 56px; }
.win-rest { margin-left: 57px; }
.win-close { margin-left: 56px; }

/* tabs */
.tabs { height: 60px; flex: none; background: #227447; display: flex; align-items: center; gap: 51px; padding-left: 41px; color: #fff; font-size: 23px; position: relative; z-index: 2; letter-spacing: -.05px; }
.tab { white-space: nowrap; position: relative; }
.tab-file { margin-right: -7px; }
.tab-home { align-self: stretch; display: flex; align-items: center; background: #f3f3f3; color: #227447; padding: 0 24px; margin-right: -24px; }
.bulb { margin-left: 6px; margin-top: -8px; }
.tell { margin-left: -25px; letter-spacing: .15px; }
.share { margin-left: auto; margin-right: 41px; display: flex; align-items: center; gap: 9px; letter-spacing: -.5px; }

/* ribbon */
.ribbon { height: 188px; flex: none; background: #f3f3f3; border-bottom: 4px solid #d6d6d6; display: flex; align-items: flex-start; padding-top: 8px; position: relative; font-size: 23px; letter-spacing: -.5px; }
.group { position: relative; display: flex; flex-direction: column; height: 168px; border-right: 3px solid #b7b7b7; flex: none; }
.g-clip { width: 192px; }
.g-font { width: 446px; }
.g-align { width: 551px; }
.g-num { width: 300px; }
.g-styles { width: 387px; }
.g-cells { width: 284px; }
.g-edit { width: 400px; }
.gbody { flex: 1; min-height: 0; }
.glabel { height: 24px; line-height: 24px; margin-bottom: -3px; text-align: center; font-size: 21.500px; white-space: nowrap; letter-spacing: -.45px; flex: none; }
.launcher { position: absolute; right: 6px; bottom: 0; }
.g-clip .glabel { padding-right: 30px; text-align: left; padding-left: 34px; letter-spacing: -.7px; }
.g-font .glabel { padding-right: 34px; }
.g-align .glabel { padding-right: 36px; }
.g-num .glabel { padding-right: 30px; }
.g-cells .glabel { padding-right: 3px; }

.row { display: flex; align-items: center; }
.rows { padding-top: 14px; display: flex; flex-direction: column; gap: 18px; }
.row1 { height: 46px; }
.row2 { height: 36px; }
.select { height: 46px; border: 3px solid #8a8a8a; background: #fff; display: flex; align-items: center; justify-content: space-between; padding: 0 7px 0 2px; font-size: 24px; color: #333; flex: none; }
.tri { width: 0; height: 0; border-left: 6px solid transparent; border-right: 6px solid transparent; border-top: 7px solid #666; flex: none; margin-top: -4px; }
.sel-font { width: 219px; margin-left: 16px; }
.sel-size { width: 100px; margin-left: 1px; padding-left: 6px; }
.sel-num { width: 268px; margin-left: 16px; }

.grow, .shrink { position: relative; color: #666; display: block; line-height: 1; }
.grow { font-size: 27px; margin-left: 16px; margin-top: 6px; }
.shrink { font-size: 22px; margin-left: 30px; margin-top: 8px; }
.grow .up { position: absolute; top: -7px; right: -6px; border-left: 4px solid transparent; border-right: 4px solid transparent; border-bottom: 5px solid #4a7eb8; }
.shrink .down { position: absolute; top: -8px; right: -6px; border-left: 4px solid transparent; border-right: 4px solid transparent; border-top: 5px solid #4a7eb8; }
.fmt { color: #555; font-size: 29px; line-height: 36px; flex: none; }
.fmt-b { margin-left: 29px; font-weight: 700; font-size: 29px; }
.fmt-i { margin-left: 30px; font-family: "Liberation Serif", serif; font-size: 32px; font-weight: 700; }
.fmt-u { margin-left: 31px; border-bottom: 2px solid #555; line-height: 32px; height: 36px; font-size: 27px; }
.c-u { margin-left: 20px; }
.vsep { width: 2px; height: 42px; background: #c6c6c6; flex: none; }
.vs-a { margin-left: 14px; }
.borders { margin-left: 12px; }
.c-b { margin-left: 17px; }
.vs-b { margin-left: 13px; }
.fill { margin-left: 12px; }
.c-f { margin-left: 15px; }
.fontcolor { margin-left: 16px; width: 32px; text-align: center; font-size: 33px; line-height: 30px; height: 38px; color: #555; position: relative; }
.fontcolor i { position: absolute; left: 0; right: 0; bottom: 0; height: 9px; background: #f00; }
.c-c { margin-left: 15px; }

.align-body { display: flex; padding-top: 14px; }
.align-left { width: 262px; display: flex; flex-direction: column; gap: 18px; flex: none; }
.al-t { margin-left: 25px; margin-top: -3px; }
.al-m { margin-left: 20px; margin-top: 6px; }
.al-b { margin-left: 11px; width: 44px; height: 46px; background: #c0c0c0; border: 3px solid #8f8f8f; display: flex; align-items: flex-end; justify-content: center; flex: none; }
.vs-c { margin-left: 6px; height: 42px; }
.orient { margin-left: 12px; }
.orient-text { font: 20px "Open Sans", sans-serif; fill: #555; }
.c-o { margin-left: 12px; }
.al-l { margin-left: 25px; }
.al-c { margin-left: 20px; }
.vs-d { margin-left: 14px; }
.indent { margin-left: 11px; }
.outdent { margin-left: 17px; }
.vs-e { height: 110px; margin-top: -2px; margin-left: 0; }
.align-right { flex: 1; position: relative; padding-left: 20px; padding-top: 1px; }
.wrap, .merge { display: flex; align-items: center; white-space: nowrap; }
.wrap { height: 46px; gap: 10px; padding-left: 0; }
.wrap-ab { font: 18px "Open Sans", sans-serif; fill: #555; }
.merge { height: 36px; margin-top: 18px; gap: 9px; margin-left: -3px; letter-spacing: .1px; }
.merge-chev { margin-left: 13px; }

.numsym { color: #555; line-height: 36px; flex: none; }
.n-d { margin-left: 29px; font-size: 31px; }
.c-d { margin-left: 24px; }
.n-p { margin-left: 18px; font-size: 31px; letter-spacing: -1px; }
.n-c { margin-left: 29px; font-size: 40px; font-weight: 700; line-height: 24px; font-family: "Liberation Serif", serif; margin-top: -12px; }
.vs-f { margin-left: 24px; }
.dec { display: flex; flex-direction: column; align-items: flex-end; font-size: 19px; line-height: 17px; color: #555; width: 30px; letter-spacing: -.3px; }
.dec span { display: flex; align-items: center; }
.dec-in { margin-left: 12px; align-items: flex-start; }
.dec-out { margin-left: 15px; }

.bigs { display: flex; }
.big { display: flex; flex-direction: column; align-items: center; white-space: nowrap; flex: none; line-height: 33px; position: relative; }
.big span { display: flex; align-items: center; gap: 9px; }
.big svg:first-child { margin-bottom: 4px; }
.big-chev { margin-top: 8px; }
.big-cf { width: 136px; margin-left: 22px; padding-top: 11px; }
.big-cf svg:first-child { margin-bottom: 2px; margin-left: 5px; }
.big-fat { width: 126px; padding-top: 9px; }
.big-fat svg:first-child { margin-bottom: 3px; margin-left: 4px; }
.big-cs { width: 90px; padding-top: 8px; margin-left: -5px; }
.big-cs svg:first-child { margin-left: 8px; margin-bottom: 4px; }
.big-ins, .big-del, .big-fmt { padding-top: 8px; width: 84px; }
.big-ins svg:first-child, .big-del svg:first-child, .big-fmt svg:first-child { margin-bottom: 6px; }
.big-ins { margin-left: 15px; }

.edit-body { display: flex; }
.edit-list { width: 203px; padding: 6px 0 0 25px; flex: none; }
.e-row { display: flex; align-items: center; white-space: nowrap; }
.e-row > span { margin-left: 8px; letter-spacing: -.3px; }
.e-sum { height: 30px; margin-top: 1px; }
.e-c1 { margin-left: 24px; }
.e-fill { height: 30px; margin-top: 15px; }
.e-c2 { margin-left: 11px; }
.e-clear { height: 30px; margin-top: 16px; margin-left: 2px; }
.e-clear > span { margin-left: 9px; }
.e-c3 { margin-left: 10px; }
.big-sort { width: 92px; padding-top: 4px; margin-left: -5px; letter-spacing: -.1px; }
.big-find { width: 92px; padding-top: 1px; margin-left: -1px; letter-spacing: -.1px; }
.big-sort svg:first-child { margin-bottom: 16px; margin-left: 3px; }
.big-find svg:first-child { margin-bottom: 15px; }
.sort-a { font: 700 33px "Open Sans", sans-serif; fill: #4a7eb8; }
.sort-z { font: 700 33px "Open Sans", sans-serif; fill: #8a5fb0; }
.collapse { position: absolute; right: 18px; bottom: 5px; }

.clip-body { display: flex; }
.paste { width: 58px; margin-left: 28px; padding-top: 8px; display: flex; flex-direction: column; align-items: center; }
.paste svg:first-child { margin-left: 6px; }
.paste-label { line-height: 33px; margin-top: 3px; margin-left: 1px; }
.paste-chev { margin-top: 14px; }
.clip-tools { padding: 6px 0 0 22px; display: flex; flex-direction: column; }
.copy-row { display: flex; align-items: center; margin-top: 17px; }
.copy-chev { margin-left: 18px; margin-top: -2px; }
.painter { margin-top: 20px; margin-left: 2px; }

/* formula bar */
.formula { height: 82px; flex: none; background: #e6e6e6; display: flex; align-items: flex-start; padding: 18px 0 0 10px; font-size: 26px; color: #444; }
.namebox { width: 202px; height: 44px; border: 1px solid #c6c6c6; background: #fff; display: flex; align-items: center; justify-content: space-between; padding: 0 11px 0 7px; font-size: 25px; }
.namebox .tri { border-left-width: 7px; border-right-width: 7px; border-top-color: #777; }
.dots { width: 60px; display: flex; flex-direction: column; align-items: center; gap: 5px; padding-top: 12px; }
.dots i { width: 4px; height: 4px; background: #b5b5b5; box-shadow: 0 0 0 .5px #b5b5b5; }
.fxbox { width: 218px; height: 44px; border: 1px solid #c6c6c6; background: #fff; display: flex; align-items: center; padding-left: 26px; gap: 47px; }
.fx { font: italic 30px "Liberation Serif", serif; color: #666; margin-left: -1px; margin-top: -4px; }
.fbox { width: 2230px; height: 44px; margin-left: 6px; border: 1px solid #c6c6c6; background: #fff; display: flex; align-items: center; justify-content: space-between; padding: 0 7px 0 20px; white-space: nowrap; letter-spacing: -.15px; }

/* sheet */
.sheet-area { height: 1259px; flex: none; display: flex; background: #e6e6e6; }
.sheet { width: 2697px; display: grid; grid-template-columns: 89px 649px 312px 342px 226px 227px 227px 227px 227px 227px; grid-template-rows: 62px repeat(19, 63px); font-family: Lato, "Liberation Sans", sans-serif; font-size: 44px; color: #000; overflow: hidden; flex: none; }
.ch { background: #e6e6e6; border-right: 1px solid #b4b4b4; border-bottom: 2px solid #9e9e9e; text-align: center; line-height: 61px; padding-top: 1px; }
.corner { display: flex; justify-content: flex-end; align-items: flex-end; padding: 0 3px 3px 0; border-bottom-color: #c8c8c8; }
.ch-sel { background: #d2d2d2; color: #217346; border-bottom: 3px solid #217346; }
.rh { background: #e6e6e6; border-right: 1px solid #b4b4b4; border-bottom: 1px solid #c6c6c6; text-align: center; line-height: 63px; }
.rh-sel { background: #d2d2d2; color: #217346; border-right: 3px solid #217346; }
.c { background: #fff; border-right: 1px solid #d4d4d4; border-bottom: 1px solid #d4d4d4; line-height: 63px; padding: 0 8px; white-space: nowrap; position: relative; letter-spacing: .5px; }
.r { text-align: right; letter-spacing: 0; }
.active::after { content: ""; position: absolute; left: -2px; top: -2px; width: 314px; height: 66px; border: 3px solid #217346; z-index: 1; }
.active::before { content: ""; position: absolute; right: -3px; bottom: -4px; width: 7px; height: 7px; background: #217346; z-index: 2; }

.vscroll { flex: 1; display: flex; flex-direction: column; padding: 1px 3px 0 3px; }
.sb-btn { height: 34px; background: #fff; border: 3px solid #7f7f7f; display: flex; align-items: center; justify-content: center; flex: none; }
.tri-up { border-top: 0; border-bottom: 8px solid #7a7a7a; border-left-width: 8px; border-right-width: 8px; margin: 0; }
.tri-down { border-top: 8px solid #7a7a7a; border-left-width: 8px; border-right-width: 8px; margin: 0; }
.sb-thumb { height: 1134px; background: #fff; border: 3px solid #7f7f7f; border-top: 0; flex: none; }
.sb-track { flex: 1; background: #d6d6d6; }

/* sheet tabs */
.sheetbar { height: 45px; flex: none; background: #e6e6e6; border-top: 2px solid #a0a0a0; border-bottom: 3px solid #c8c8c8; display: flex; align-items: stretch; font-size: 26px; color: #555; letter-spacing: -.5px; white-space: nowrap; }
.sheet-nav { width: 146px; display: flex; align-items: center; padding-left: 33px; border-right: 1px solid #bdbdbd; margin: 4px 0 3px; flex: none; }
.nav-l { border-top: 8px solid transparent; border-bottom: 8px solid transparent; border-right: 8px solid #217346; }
.nav-r { border-top: 8px solid transparent; border-bottom: 8px solid transparent; border-left: 8px solid #217346; margin-left: 33px; }
.more { color: #217346; font-weight: 700; font-size: 24px; margin-left: 24px; line-height: 26px; letter-spacing: 0; }
.stab { display: flex; align-items: center; flex: none; padding-bottom: 8px; }
.st-k { width: 164px; padding-left: 19px; position: relative; }
.st-k::after, .st-e::after { content: ""; position: absolute; right: 0; top: 4px; bottom: 3px; width: 1px; background: #bdbdbd; }
.st-o { width: 355px; padding-left: 22px; position: relative; }
.st-active { width: 291px; background: #fff; color: #227447; font-weight: 700; padding-left: 12px; border-bottom: 3px solid #227447; height: 38px; letter-spacing: -.25px; padding-bottom: 4px; }
.st-e { width: 278px; padding-left: 22px; position: relative; }
.st-s { width: 77px; padding-left: 25px; }
.clip { display: block; width: 50px; overflow: hidden; }
.more2 { margin-left: 8px; align-self: center; }
.addsheet { margin-left: 18px; align-self: center; }
.dots-s { width: 45px; gap: 5px; padding-top: 9px; }
.hscroll { display: flex; width: 1259px; height: 34px; margin: 3px 0 0 0; flex: none; }
.hs-btn { width: 33px; background: #fff; border: 3px solid #7f7f7f; display: flex; align-items: center; justify-content: center; flex: none; }
.nav-gl { border-top: 8px solid transparent; border-bottom: 8px solid transparent; border-right: 8px solid #7a7a7a; }
.nav-gr { border-top: 8px solid transparent; border-bottom: 8px solid transparent; border-left: 8px solid #7a7a7a; }
.hs-thumb { width: 1044px; background: #fff; border: 3px solid #7f7f7f; border-left: 0; flex: none; }
.hs-track { flex: 1; background: #d6d6d6; }

/* status bar */
.status { height: 42px; flex: none; background: #f1f1f1; display: flex; align-items: center; font-size: 21px; color: #444; letter-spacing: -.35px; white-space: nowrap; }
.ready { margin-left: 14px; }
.macro { margin-left: 38px; }
.a11y { margin-left: 37px; }
.a11y-text { margin-left: 1px; }
.status-right { margin-left: auto; display: flex; align-items: center; height: 100%; }
.display-text { margin-left: 3px; }
.view-sel { width: 80px; height: 100%; background: #c6c6c6; margin-left: 36px; display: flex; align-items: center; justify-content: center; }
.v-page { margin-left: 28px; }
.v-brk { margin-left: 54px; }
.z-minus { width: 14px; height: 2px; background: #666; margin-left: 39px; }
.z-slider { display: block; width: 198px; height: 3px; background: #333; margin-left: 13px; position: relative; }
.z-tick { position: absolute; left: 99px; top: -7px; width: 1px; height: 17px; background: #333; }
.z-thumb { position: absolute; left: 116px; top: -12px; width: 10px; height: 26px; background: #666; }
.z-plus { display: block; width: 15px; height: 15px; margin-left: 11px; background: linear-gradient(#666,#666) center/15px 1.500px no-repeat, linear-gradient(#666,#666) center/1.500px 15px no-repeat; }
.z-pct { margin-left: 23px; margin-right: 16px; }

/* taskbar */
.taskbar { height: 80px; flex: none; background: #18212f; display: flex; align-items: center; color: #fff; position: relative; }
.start { width: 97px; height: 100%; display: flex; align-items: center; justify-content: center; }
.start svg { margin-left: -1px; margin-top: -2px; }
.search { width: 686px; height: 80px; background: #f2f2f2; border: 2px solid #c8c8c8; border-right: 0; border-bottom-width: 3px; display: flex; align-items: center; color: #333; flex: none; }
.search-ic { margin-left: 21px; }
.search-text { margin-left: 23px; font-size: 29px; letter-spacing: -.6px; white-space: nowrap; }
.search-art { margin-left: auto; margin-right: 11px; }
.app-slot { width: 98px; height: 100%; display: flex; align-items: center; justify-content: center; position: relative; flex: none; }
.slot-first { width: 102px; padding-right: 4px; }
.running::after { content: ""; position: absolute; left: 9px; right: 9px; bottom: 0; height: 4px; background: #b3e3fb; }
.slot-excel { background: #4a5360; }
.slot-excel::after { left: 0; right: 0; }
.slot-first svg, .app-slot svg { margin-top: -4px; }
.chrome-d { font: 700 22px "Open Sans", sans-serif; fill: #e8ddd6; text-anchor: middle; }
.xl-x { font: 700 21px "Open Sans", sans-serif; fill: #fff; }
.clap-1 { font: 700 24px "Open Sans", sans-serif; fill: #d8623f; }
.clap-2 { font: 700 24px "Open Sans", sans-serif; fill: #2f7fd8; }
.clap-3 { font: 700 24px "Open Sans", sans-serif; fill: #38a85c; }
.people { margin-left: 239px; margin-top: -4px; }
.moon { margin-left: 213px; margin-top: -2px; }
.weather { margin-left: 18px; font-size: 27px; letter-spacing: -.45px; white-space: nowrap; }
.caret { margin-left: 42px; }
.pen { margin-left: 42px; }
.kbd { margin-left: 40px; }
.clock { width: 160px; margin-left: 4px; display: flex; flex-direction: column; align-items: center; font-size: 23.500px; line-height: 37px; letter-spacing: -.5px; white-space: nowrap; margin-top: -2px; }
.notif { margin-left: 12px; }
.peek { position: absolute; right: 9px; top: 0; bottom: 0; width: 1px; background: #5a6370; }
```
